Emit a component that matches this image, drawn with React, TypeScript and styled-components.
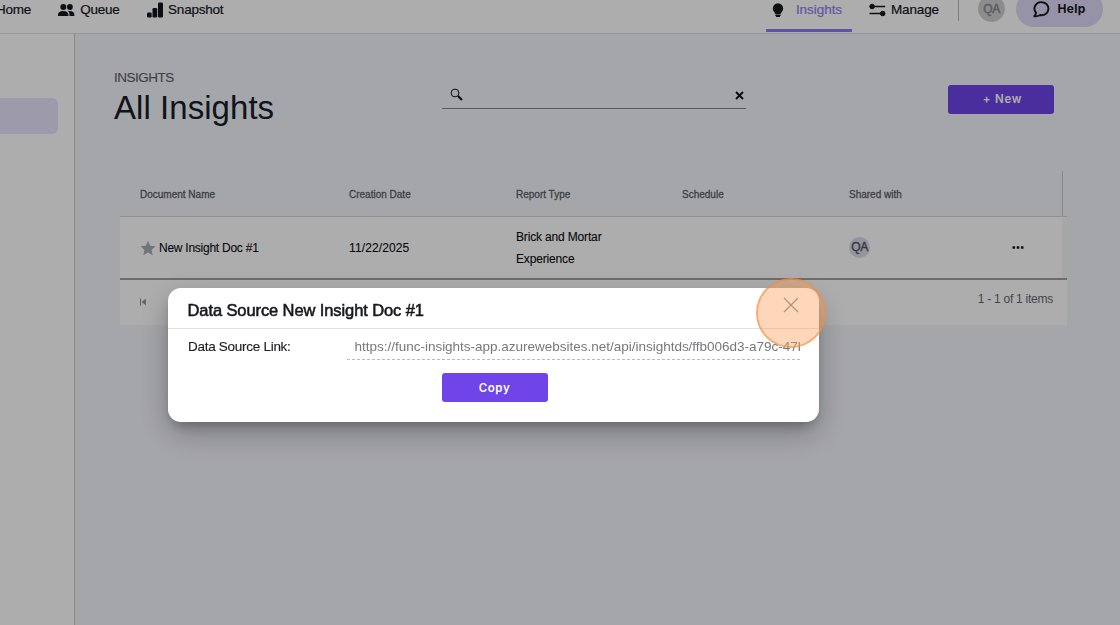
import React from "react";
import styled, { createGlobalStyle } from "styled-components";

const GlobalStyle = createGlobalStyle`
  * { box-sizing: border-box; }
  body { margin: 0; overflow: hidden; font-family: "Liberation Sans", Arial, sans-serif; color: #1d1f26; }
  button { font: inherit; border: 0; padding: 0; background: none; color: inherit; }
`;

const Page = styled.div`
  height: 625px;
  width: 1120px;
  overflow: hidden;
  display: flex;
  flex-direction: column;
  background: #f4f5fb;
`;

const Header = styled.header`
  height: 34px;
  flex: none;
  overflow: hidden;
  background: #fff;
  border-bottom: 1px solid #dfe0e5;
`;

const HeaderBar = styled.div`
  height: 36px;
  margin-top: -9px;
  display: flex;
  align-items: center;
  justify-content: space-between;
  padding-right: 17px;
`;

const NavGroup = styled.nav<{ $indent?: number }>`
  display: flex;
  align-items: center;
  height: 36px;
  margin-left: ${(p) => p.$indent ?? 0}px;
`;

const NavItem = styled.a<{ $gap: number; $after: number; $tracking?: number }>`
  display: flex;
  align-items: center;
  gap: ${(p) => p.$gap}px;
  margin-right: ${(p) => p.$after}px;
  font-size: 13.5px;
  line-height: 16px;
  letter-spacing: ${(p) => p.$tracking ?? -0.22}px;
  padding-top: 1px;
  color: #15171c;
  -webkit-text-stroke: 0.2px currentColor;
  svg { flex: none; }
`;

const ActiveTab = styled(NavItem)`
  align-self: flex-start;
  width: 86px;
  height: 41px;
  padding: 0 0 1px 6px;
  border-bottom: 3px solid #917bf0;
  color: #9280ea;
  svg { color: #15171c; }
`;

const Divider = styled.span`
  width: 1px;
  height: 25px;
  align-self: flex-start;
  margin: 5px 19px 0 0;
  background: #b9bac0;
`;

const Avatar = styled.span<{ $size: number; $bg: string; $fg: string; $font: number }>`
  width: ${(p) => p.$size}px;
  height: ${(p) => p.$size}px;
  flex: none;
  margin-top: -1px;
  border-radius: 50%;
  display: flex;
  align-items: center;
  justify-content: center;
  background: ${(p) => p.$bg};
  color: ${(p) => p.$fg};
  font-size: ${(p) => p.$font}px;
  letter-spacing: -0.5px;
  -webkit-text-stroke: 0.4px currentColor;
`;

const HelpButton = styled.button`
  width: 87px;
  height: 36px;
  margin-left: 11px;
  border-radius: 18px;
  display: flex;
  align-items: center;
  justify-content: center;
  gap: 7px;
  background: #ded9f8;
  font: 700 12px/16px Inter, sans-serif;
  letter-spacing: 0.3px;
  color: #15171c;
`;

const Body = styled.div`
  flex: 1;
  display: flex;
  min-height: 0;
`;

const Sidebar = styled.aside`
  width: 75px;
  flex: none;
  background: #fff;
  border-right: 1px solid #cbccd2;
  padding: 64px 16px 0 0;
`;

const SidebarItem = styled.div`
  height: 36px;
  border-radius: 0 6px 6px 0;
  background: #e8e3fd;
`;

const Main = styled.main`
  flex: 1;
  padding: 35px 53px 0 39px;
`;

const TitleRow = styled.div`
  display: flex;
  align-items: flex-start;
  height: 102px;
  padding-right: 13px;
`;

const TitleBlock = styled.div`
  width: 328px;
  padding-top: 1px;
`;

const Eyebrow = styled.div`
  font-size: 13.5px;
  line-height: 16px;
  letter-spacing: -0.5px;
  color: #5f6167;
  -webkit-text-stroke: 0.15px currentColor;
`;

const Title = styled.h1`
  margin: 2px 0 0;
  font-size: 33px;
  line-height: 40px;
  font-weight: 400;
  letter-spacing: 0.05px;
  color: #16202a;
`;

const SearchField = styled.div`
  width: 304px;
  height: 25px;
  margin-top: 15px;
  padding: 4px 2px 0 8px;
  display: flex;
  justify-content: space-between;
  border-bottom: 1px solid #85868d;
`;

const ClearIcon = styled.svg`
  margin-top: 3px;
`;

const PrimaryButton = styled.button<{ $tracking: number }>`
  width: 106px;
  height: 29px;
  border-radius: 3px;
  background: #6f45e9;
  color: #fff;
  font: 600 11.5px/16px Inter, sans-serif;
  letter-spacing: ${(p) => p.$tracking}px;
`;

const ButtonSlot = styled.div`
  margin: 16px 0 0 auto;
  button { padding: 0 0 1px 3px; }
`;

const Table = styled.section`
  margin-left: 6px;
  width: 947px;
`;

const GridRow = styled.div`
  display: grid;
  grid-template-columns: 209px 167px 166px 167px 163px 1fr;
  align-items: center;
  padding-right: 5px;
`;

const HeadRow = styled(GridRow)`
  height: 46px;
  background: linear-gradient(to right, transparent 942px, #c9cbd2 942px, #c9cbd2 943px, transparent 943px);
  border-bottom: 1px solid #d2d3d9;
`;

const HeadCell = styled.div`
  padding: 2px 0 0 20px;
  font-size: 10px;
  line-height: 14px;
  color: #5c5e65;
  -webkit-text-stroke: 0.3px currentColor;
`;

const DataRow = styled(GridRow)`
  height: 63px;
  background: linear-gradient(to right, #fff 942px, #f6f6f6 942px);
  border-bottom: 2px solid #a0a0a0;
`;

const Cell = styled.div<{ $tracking?: number }>`
  display: flex;
  align-items: center;
  gap: 3px;
  padding: 1px 0 0 20px;
  font-size: 12px;
  line-height: 22.5px;
  letter-spacing: ${(p) => p.$tracking ?? -0.25}px;
  color: #0c0d10;
  -webkit-text-stroke: 0.1px currentColor;
`;

const Pager = styled.div`
  height: 45px;
  display: flex;
  justify-content: space-between;
  align-items: flex-start;
  padding: 11px 14px 0 19px;
  background: #fff;
  font-size: 12px;
  letter-spacing: -0.25px;
  line-height: 16px;
  color: #66686d;
  svg { margin-top: 7px; }
`;

const Scrim = styled.div`
  position: fixed;
  inset: 0;
  padding: 288px 0 0 168px;
  background: rgba(0, 0, 0, 0.32);
`;

const Dialog = styled.div`
  position: relative;
  width: 651px;
  height: 134px;
  border-radius: 13px;
  background: #fff;
  box-shadow: 0 7px 12px -4px rgba(0, 0, 0, 0.25), 0 11px 30px 0 rgba(0, 0, 0, 0.27);
`;

const DialogHead = styled.div`
  height: 41px;
  display: flex;
  justify-content: space-between;
  padding: 9px 20px 0 19.5px;
  border-bottom: 1px solid #e1e1e3;
`;

const DialogTitle = styled.h2`
  margin: 3px 0 0;
  font-size: 16.5px;
  line-height: 20px;
  font-weight: 400;
  letter-spacing: -0.1px;
  color: #17181b;
  -webkit-text-stroke: 0.55px currentColor;
`;

const LinkRow = styled.div`
  display: flex;
  padding: 5px 19px 0 20px;
`;

const LinkLabel = styled.label`
  width: 159px;
  font-size: 13.5px;
  line-height: 26px;
  letter-spacing: -0.28px;
  color: #1f2024;
  -webkit-text-stroke: 0.15px currentColor;
`;

const LinkValue = styled.div`
  flex: 1;
  min-width: 0;
  height: 26px;
  padding-left: 7.5px;
  overflow: hidden;
  white-space: nowrap;
  font-size: 13.5px;
  line-height: 26px;
  letter-spacing: -0.01px;
  color: #77787c;
  border-bottom: 1px dashed #bcbcbe;
`;

const DialogActions = styled.div`
  display: flex;
  justify-content: center;
  padding: 13px 0 0 2px;
`;

const ClickMarker = styled.div`
  position: absolute;
  left: 588px;
  top: -10px;
  width: 70px;
  height: 70px;
  border-radius: 50%;
  border: 2.5px solid rgba(242, 144, 66, 0.75);
  background: rgba(253, 155, 82, 0.4);
  background-clip: padding-box;
`;

const QueueIcon = () => (
  <svg width="18" height="14" viewBox="0 0 18 14" fill="currentColor">
    <circle cx="5.300" cy="4" r="3" />
    <circle cx="11.900" cy="4" r="2.900" />
    <path d="M0 13v-1.500C0 9.300 2.500 8 5.200 8s5.200 1.300 5.200 3.500V13z" />
    <path d="M11.500 13v-1.700c0-1.300-.5-2.300-1.400-3.100 3.400-.6 6.300.7 6.300 3.300V13z" />
  </svg>
);

const SnapshotIcon = () => (
  <svg width="17" height="16" viewBox="0 0 17 16" fill="currentColor">
    <rect x="0" y="10.500" width="4.700" height="5" rx="1.200" />
    <rect x="5.500" y="6" width="4.700" height="9.500" rx="1.200" />
    <rect x="11" y=".5" width="5" height="15" rx="1.200" />
  </svg>
);

const BulbIcon = () => (
  <svg width="12" height="14" viewBox="0 0 12 14" fill="currentColor">
    <path d="M6 .2a5.200 5.200 0 0 0-5.200 5.200c0 2 1.200 3.200 2 4.300.3.500.4.900.4 1.300h5.600c0-.4.100-.8.400-1.300.8-1.100 2-2.300 2-4.300A5.200 5.200 0 0 0 6 .2z" />
    <path d="M3.400 11.600h5.200v.8L7.600 13.900H4.400l-1-1.500z" />
  </svg>
);

const SlidersIcon = () => (
  <svg width="17" height="14" viewBox="0 0 17 14" fill="currentColor" stroke="currentColor">
    <path d="M3 3.500h13.200M.5 10.500h12" strokeWidth="1.500" fill="none" />
    <circle cx="3.100" cy="3.500" r="2.300" />
    <circle cx="13.700" cy="10.500" r="2.300" />
  </svg>
);

const ChatIcon = () => (
  <svg width="17" height="17" viewBox="0 0 17 17" fill="none" stroke="currentColor" strokeWidth="1.900" strokeLinejoin="round">
    <path d="M9 1.200a6.500 6.500 0 1 1-1.700 12.800C5.500 15 3.400 15.500 1.200 15.300c1-.9 1.700-2.200 1.900-3.400A6.500 6.500 0 0 1 9 1.200z" />
  </svg>
);

const SearchIcon = () => (
  <svg width="13" height="13" viewBox="0 0 13 13" fill="none" stroke="#15171c">
    <circle cx="5" cy="5" r="3.900" strokeWidth="1" />
    <path d="M8 8l4 4" strokeWidth="2.100" />
  </svg>
);

const columns = ["Document Name", "Creation Date", "Report Type", "Schedule", "Shared with"];

export default function App() {
  return (
    <Page>
      <GlobalStyle />
      <Header>
        <HeaderBar>
          <NavGroup $indent={-4}>
            <NavItem $gap={0} $after={27}>Home</NavItem>
            <NavItem $gap={4} $after={27.5}><QueueIcon />Queue</NavItem>
            <NavItem $gap={4} $after={0}><SnapshotIcon />Snapshot</NavItem>
          </NavGroup>
          <NavGroup>
            <ActiveTab $gap={12} $after={17} $tracking={-0.05}><BulbIcon />Insights</ActiveTab>
            <NavItem $gap={5} $after={19} $tracking={-0.12}><SlidersIcon />Manage</NavItem>
            <Divider />
            <Avatar $size={27} $bg="#cfcfcf" $fg="#85868a" $font={12}>QA</Avatar>
            <HelpButton><ChatIcon />Help</HelpButton>
          </NavGroup>
        </HeaderBar>
      </Header>
      <Body>
        <Sidebar><SidebarItem /></Sidebar>
        <Main>
          <TitleRow>
            <TitleBlock>
              <Eyebrow>INSIGHTS</Eyebrow>
              <Title>All Insights</Title>
            </TitleBlock>
            <SearchField>
              <SearchIcon />
              <ClearIcon width="9" height="9" viewBox="0 0 9 9" stroke="#10131f" strokeWidth="1.900">
                <path d="M1 1l7 7M8 1L1 8" />
              </ClearIcon>
            </SearchField>
            <ButtonSlot><PrimaryButton $tracking={0.8}>+ New</PrimaryButton></ButtonSlot>
          </TitleRow>
          <Table>
            <HeadRow>
              {columns.map((c) => <HeadCell key={c}>{c}</HeadCell>)}
            </HeadRow>
            <DataRow>
              <Cell>
                <svg width="16" height="16" viewBox="0 0 16 16" fill="#a9acb6">
                  <path d="M8 .8l2.200 4.900 5.300.6-3.900 3.600 1.100 5.300L8 12.500l-4.700 2.700 1.100-5.300L.5 6.300l5.300-.6z" />
                </svg>
                New Insight Doc #1
              </Cell>
              <Cell $tracking={0.12}>11/22/2025</Cell>
              <Cell $tracking={-0.16}>Brick and Mortar<br />Experience</Cell>
              <Cell />
              <Cell><Avatar $size={21} $bg="#dcdee8" $fg="#4c5363" $font={12}>QA</Avatar></Cell>
              <Cell>
                <svg width="12" height="4" viewBox="0 0 12 4" fill="#15171c">
                  <rect x=".5" y=".3" width="2.600" height="2.400" rx=".5" />
                  <rect x="4.700" y=".3" width="2.600" height="2.400" rx=".5" />
                  <rect x="8.900" y=".3" width="2.600" height="2.400" rx=".5" />
                </svg>
              </Cell>
            </DataRow>
            <Pager>
              <svg width="8" height="8" viewBox="0 0 8 8" fill="#8b8b8e">
                <path d="M1 .5h1v7H1zM6.800.7v6.600L2.600 4z" />
              </svg>
              1 - 1 of 1 items
            </Pager>
          </Table>
        </Main>
      </Body>
      <Scrim>
        <Dialog>
          <DialogHead>
            <DialogTitle>Data Source New Insight Doc #1</DialogTitle>
            <svg width="16" height="16" viewBox="0 0 16 16" stroke="#8d8d8f" strokeWidth="1.300">
              <path d="M1 1l14 14M15 1L1 15" />
            </svg>
          </DialogHead>
          <LinkRow>
            <LinkLabel>Data Source Link:</LinkLabel>
            <LinkValue>https://func-insights-app.azurewebsites.net/api/insightds/ffb006d3-a79c-47b</LinkValue>
          </LinkRow>
          <DialogActions><PrimaryButton $tracking={0.6}>Copy</PrimaryButton></DialogActions>
          <ClickMarker />
        </Dialog>
      </Scrim>
    </Page>
  );
}
